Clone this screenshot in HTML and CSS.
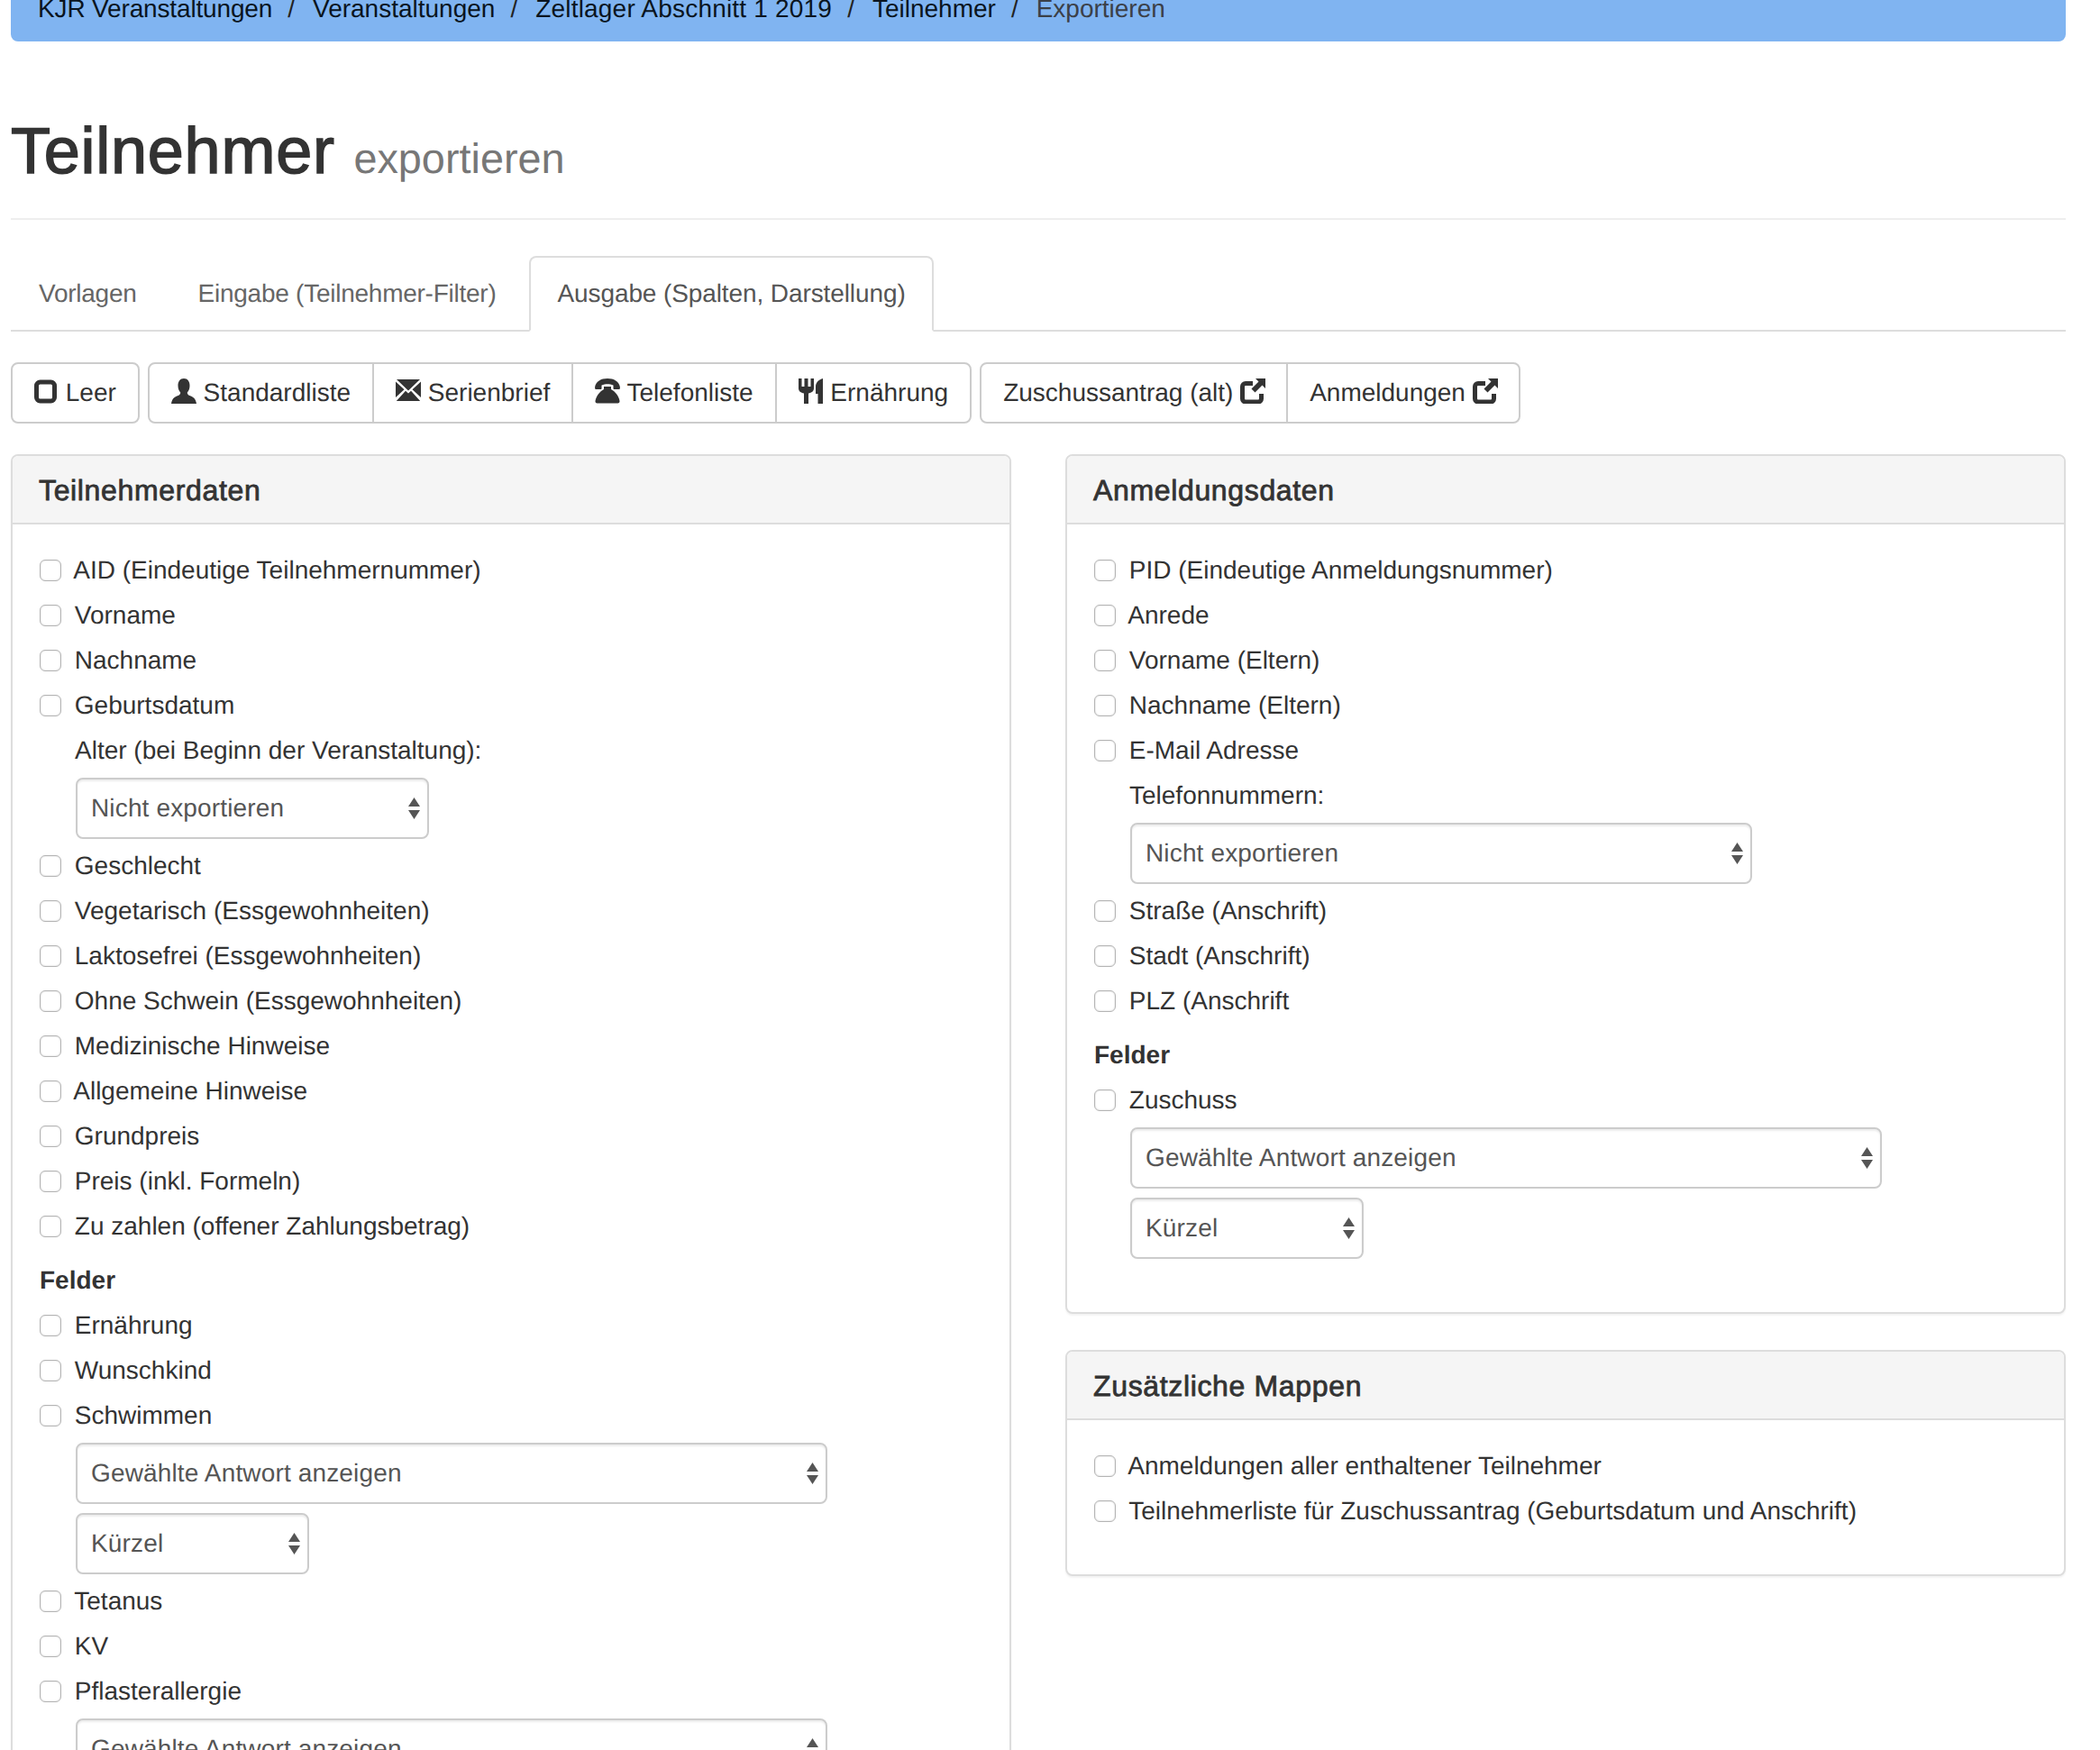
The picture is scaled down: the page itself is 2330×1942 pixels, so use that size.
FILE: index.html
```html
<!DOCTYPE html>
<html lang="de">
<head>
<meta charset="UTF-8" />
<title>Teilnehmer exportieren</title>
<link rel="stylesheet" href="styles.css">
</head>
<body>
<div class="page">

  <ol class="breadcrumb">
    <li><a href="#">KJR Veranstaltungen</a></li>
    <li><a href="#">Veranstaltungen</a></li>
    <li><a href="#">Zeltlager Abschnitt 1 2019</a></li>
    <li><a href="#">Teilnehmer</a></li>
    <li class="active">Exportieren</li>
  </ol>

  <div class="page-header">
    <h1>Teilnehmer <small>exportieren</small></h1>
  </div>

  <ul class="tabs">
    <li><a href="#">Vorlagen</a></li>
    <li><a href="#">Eingabe (Teilnehmer-Filter)</a></li>
    <li class="active"><a href="#">Ausgabe (Spalten, Darstellung)</a></li>
  </ul>

  <div class="toolbar">
    <div class="btn-group">
      <button class="btn"><svg class="icon tight" viewBox="0 0 28 28"><rect x="2.500" y="4" width="20" height="21" rx="4" fill="none" stroke="#333" stroke-width="5"/></svg> Leer</button>
    </div>
    <div class="btn-group">
      <button class="btn"><svg class="icon" viewBox="0 0 28 28"><path d="M14 0c4.200 0 6.500 3.500 6.500 8 0 3-1 5.800-2.700 7.500 0 1.700.7 2.700 2.700 3.600 3 1.300 6.500 2.400 7.500 8.900H0c1-6.500 4.500-7.600 7.500-8.900 2-.9 2.700-1.900 2.700-3.600C8.500 13.800 7.500 11 7.500 8 7.500 3.500 9.800 0 14 0z"/></svg> Standardliste</button>
      <button class="btn"><svg class="icon" viewBox="0 0 28 28"><path d="M1 1h26L14 13.500zM0 3.500l9.500 8.800L0 21zM28 3.500l-9.500 8.800L28 21zM.8 25l10.200-11.300 3 2.900 3-2.900L27.200 25z"/></svg> Serienbrief</button>
      <button class="btn"><svg class="icon" viewBox="0 0 28 28"><path d="M0 10C1 3 7 0 14 0s13 3 14 10l-.5 2h-6c-.6 0-1-.4-1-1V7.500C18.500 6.500 16 6.200 14 6.200S9.500 6.500 7.500 7.500V11c0 .6-.4 1-1 1H.5zM10 9h8v3c4 2 8.500 7 9.500 13 .2 1.500-.8 2.500-2 2.500H2.500c-1.200 0-2.200-1-2-2.500C1.500 19 6 14 10 12z"/></svg> Telefonliste</button>
      <button class="btn"><svg class="icon" viewBox="0 0 28 28"><path d="M0 0h3.500v9h3V0h4v9h3V0H17v11c0 3-2.500 5-6 5.500V28H6V16.500C2.500 16 0 14 0 11zM27 0v28h-5.500V17H19V9c0-5 4-8 8-9z"/></svg> Ernährung</button>
    </div>
    <div class="btn-group">
      <button class="btn">Zuschussantrag (alt) <svg class="icon tight" viewBox="0 0 28 28"><path d="M14 5.500H6A3.500 3.500 0 0 0 2.500 9v13.500A3.500 3.500 0 0 0 6 26h14a3.500 3.500 0 0 0 3.500-3.500V17" fill="none" stroke="#333" stroke-width="5"/><path d="M17 0h11v11l-3.500-3.500-8 8-4-4 8-8z"/></svg></button>
      <button class="btn">Anmeldungen <svg class="icon tight" viewBox="0 0 28 28"><path d="M14 5.500H6A3.500 3.500 0 0 0 2.500 9v13.500A3.500 3.500 0 0 0 6 26h14a3.500 3.500 0 0 0 3.500-3.500V17" fill="none" stroke="#333" stroke-width="5"/><path d="M17 0h11v11l-3.500-3.500-8 8-4-4 8-8z"/></svg></button>
    </div>
  </div>

  <div class="columns">
    <div class="column">
      <section class="panel">
        <h3 class="panel-heading">Teilnehmerdaten</h3>
        <div class="panel-body">
          <label class="check"><input type="checkbox"> AID (Eindeutige Teilnehmernummer)</label>
          <label class="check"><input type="checkbox"> Vorname</label>
          <label class="check"><input type="checkbox"> Nachname</label>
          <label class="check"><input type="checkbox"> Geburtsdatum</label>
          <div class="sub-label">Alter (bei Beginn der Veranstaltung):</div>
          <div class="select-wrap w-age">
            <select><option>Nicht exportieren</option></select>
            <svg class="select-arrows" viewBox="0 0 13 24"><path d="M6.500 0L13 10H0zM6.500 24L0 14h13z"/></svg>
          </div>
          <label class="check"><input type="checkbox"> Geschlecht</label>
          <label class="check"><input type="checkbox"> Vegetarisch (Essgewohnheiten)</label>
          <label class="check"><input type="checkbox"> Laktosefrei (Essgewohnheiten)</label>
          <label class="check"><input type="checkbox"> Ohne Schwein (Essgewohnheiten)</label>
          <label class="check"><input type="checkbox"> Medizinische Hinweise</label>
          <label class="check"><input type="checkbox"> Allgemeine Hinweise</label>
          <label class="check"><input type="checkbox"> Grundpreis</label>
          <label class="check"><input type="checkbox"> Preis (inkl. Formeln)</label>
          <label class="check"><input type="checkbox"> Zu zahlen (offener Zahlungsbetrag)</label>
          <div class="group-title">Felder</div>
          <label class="check"><input type="checkbox"> Ernährung</label>
          <label class="check"><input type="checkbox"> Wunschkind</label>
          <label class="check"><input type="checkbox"> Schwimmen</label>
          <div class="select-wrap w-wide">
            <select><option>Gewählte Antwort anzeigen</option></select>
            <svg class="select-arrows" viewBox="0 0 13 24"><path d="M6.500 0L13 10H0zM6.500 24L0 14h13z"/></svg>
          </div>
          <div class="select-wrap w-short">
            <select><option>Kürzel</option></select>
            <svg class="select-arrows" viewBox="0 0 13 24"><path d="M6.500 0L13 10H0zM6.500 24L0 14h13z"/></svg>
          </div>
          <label class="check"><input type="checkbox"> Tetanus</label>
          <label class="check"><input type="checkbox"> KV</label>
          <label class="check"><input type="checkbox"> Pflasterallergie</label>
          <div class="select-wrap w-wide">
            <select><option>Gewählte Antwort anzeigen</option></select>
            <svg class="select-arrows" viewBox="0 0 13 24"><path d="M6.500 0L13 10H0zM6.500 24L0 14h13z"/></svg>
          </div>
        </div>
      </section>
    </div>

    <div class="column">
      <section class="panel">
        <h3 class="panel-heading">Anmeldungsdaten</h3>
        <div class="panel-body">
          <label class="check"><input type="checkbox"> PID (Eindeutige Anmeldungsnummer)</label>
          <label class="check"><input type="checkbox"> Anrede</label>
          <label class="check"><input type="checkbox"> Vorname (Eltern)</label>
          <label class="check"><input type="checkbox"> Nachname (Eltern)</label>
          <label class="check"><input type="checkbox"> E-Mail Adresse</label>
          <div class="sub-label">Telefonnummern:</div>
          <div class="select-wrap w-phone">
            <select><option>Nicht exportieren</option></select>
            <svg class="select-arrows" viewBox="0 0 13 24"><path d="M6.500 0L13 10H0zM6.500 24L0 14h13z"/></svg>
          </div>
          <label class="check"><input type="checkbox"> Straße (Anschrift)</label>
          <label class="check"><input type="checkbox"> Stadt (Anschrift)</label>
          <label class="check"><input type="checkbox"> PLZ (Anschrift</label>
          <div class="group-title">Felder</div>
          <label class="check"><input type="checkbox"> Zuschuss</label>
          <div class="select-wrap w-wide">
            <select><option>Gewählte Antwort anzeigen</option></select>
            <svg class="select-arrows" viewBox="0 0 13 24"><path d="M6.500 0L13 10H0zM6.500 24L0 14h13z"/></svg>
          </div>
          <div class="select-wrap w-short last">
            <select><option>Kürzel</option></select>
            <svg class="select-arrows" viewBox="0 0 13 24"><path d="M6.500 0L13 10H0zM6.500 24L0 14h13z"/></svg>
          </div>
        </div>
      </section>

      <section class="panel">
        <h3 class="panel-heading">Zusätzliche Mappen</h3>
        <div class="panel-body extra">
          <label class="check"><input type="checkbox"> Anmeldungen aller enthaltener Teilnehmer</label>
          <label class="check"><input type="checkbox"> Teilnehmerliste für Zuschussantrag (Geburtsdatum und Anschrift)</label>
        </div>
      </section>
    </div>
  </div>

</div>
</body>
</html>
```

FILE: styles.css
```css
/* Grundeinstellungen */
html, body {
  margin: 0;
  padding: 0;
  height: 100%;
  overflow: hidden;
  background: #fff;
}
body {
  font-family: "Liberation Sans", Arial, sans-serif;
  font-size: 28px;
  line-height: 40px;
  color: #333;
  text-rendering: geometricPrecision;
}
.page {
  padding: 0 38px 0 12px;
}

/* Breadcrumb, oben abgeschnitten */
.breadcrumb {
  list-style: none;
  display: flex;
  margin: -26px 0 0;
  padding: 16px 30px;
  background: #80b4f1;
  border-radius: 8px;
}
.breadcrumb li + li::before {
  content: "/";
  padding: 0 20px 0 17px;
  color: #222;
}
.breadcrumb a {
  color: #0a1420;
  text-decoration: none;
}
.breadcrumb li:first-child a {
  letter-spacing: -0.15px;
}
.breadcrumb li:nth-child(3) a {
  letter-spacing: 0.2px;
}
.breadcrumb .active {
  color: #3b4048;
}

/* Seitenkopf */
.page-header {
  margin: 83px 0 40px;
  padding-bottom: 26px;
  border-bottom: 2px solid #eee;
}
.page-header h1 {
  margin: 0;
  font-size: 72px;
  line-height: 79px;
  font-weight: normal;
  letter-spacing: 0.75px;
  -webkit-text-stroke: 1.5px #333;
}
.page-header small {
  font-size: 46.8px;
  letter-spacing: 0;
  color: #777;
  -webkit-text-stroke: 0;
}

/* Tabs */
.tabs {
  list-style: none;
  display: flex;
  gap: 6px;
  margin: 0 0 34px;
  padding: 0;
  height: 82px;
  border-bottom: 2px solid #ddd;
}
.tabs a {
  display: block;
  padding: 20px 29px;
  border: 2px solid transparent;
  border-radius: 8px 8px 0 0;
  color: #666;
  letter-spacing: -0.25px;
  text-decoration: none;
}
.tabs .active a {
  color: #555;
  background: #fff;
  border-color: #ddd #ddd #fff;
  letter-spacing: -0.1px;
}

/* Buttons */
.toolbar {
  display: flex;
  gap: 9px;
  margin-bottom: 34px;
}
.btn-group {
  display: flex;
}
.btn {
  font: inherit;
  color: #333;
  background: #fff;
  height: 68px;
  padding: 12px 24px;
  border: 2px solid #ccc;
  border-radius: 0;
  margin-left: -2px;
  white-space: nowrap;
  text-rendering: geometricPrecision;
}
.btn-group .btn:first-child {
  margin-left: 0;
  border-radius: 8px 0 0 8px;
}
.btn-group .btn:last-child {
  border-radius: 0 8px 8px 0;
}
.btn-group .btn:only-child {
  border-radius: 8px;
}
.icon {
  width: 28px;
  height: 28px;
  fill: #333;
  vertical-align: -3px;
}
.icon.tight {
  margin-right: -1px;
}

/* Spalten und Panels */
.columns {
  display: grid;
  grid-template-columns: 1fr 1fr;
  gap: 60px;
  align-items: start;
}
.panel {
  border: 2px solid #ddd;
  border-radius: 8px;
  background: #fff;
  margin-bottom: 40px;
  box-shadow: 0 2px 2px rgba(0,0,0,0.05);
}
.panel-heading {
  margin: 0;
  padding: 18px 29px 16px;
  font-size: 32px;
  line-height: 40px;
  font-weight: normal;
  letter-spacing: 0.65px;
  -webkit-text-stroke: 0.8px #333;
  background: #f5f5f5;
  border-bottom: 2px solid #ddd;
  border-radius: 6px 6px 0 0;
}
.panel-body {
  display: flex;
  flex-direction: column;
  gap: 10px;
  padding: 31px 30px 30px;
}
.panel-body.extra {
  padding-bottom: 50px;
}

/* Formularzeilen */
.check {
  display: flex;
  align-items: center;
  height: 40px;
  white-space: pre;
}
.check input {
  appearance: none;
  flex: none;
  width: 24px;
  height: 24px;
  margin: 0 7px 0 0;
  border: 1px solid #b4b4b4;
  border-radius: 6px;
  background: #fff;
  box-shadow: inset 0 0 2px rgba(0,0,0,0.2);
}
.sub-label {
  margin-left: 39px;
}
.group-title {
  margin-top: 10px;
  font-weight: bold;
}
.select-wrap {
  position: relative;
  margin-left: 40px;
  height: 68px;
}
.select-wrap.last {
  margin-bottom: 29px;
}
.select-wrap select {
  appearance: none;
  display: block;
  width: 100%;
  height: 100%;
  padding: 0 36px 0 15px;
  font: inherit;
  letter-spacing: 0.15px;
  color: #555;
  background: #fff;
  border: 2px solid #ccc;
  border-radius: 8px;
  box-shadow: inset 0 2px 2px rgba(0,0,0,0.075);
  text-rendering: geometricPrecision;
}
.select-arrows {
  position: absolute;
  right: 10px;
  top: 22px;
  width: 13px;
  height: 24px;
  fill: #555;
}
.w-age { width: 392px; }
.w-phone { width: 690px; }
.w-wide { width: 834px; }
.w-short { width: 259px; }
```
